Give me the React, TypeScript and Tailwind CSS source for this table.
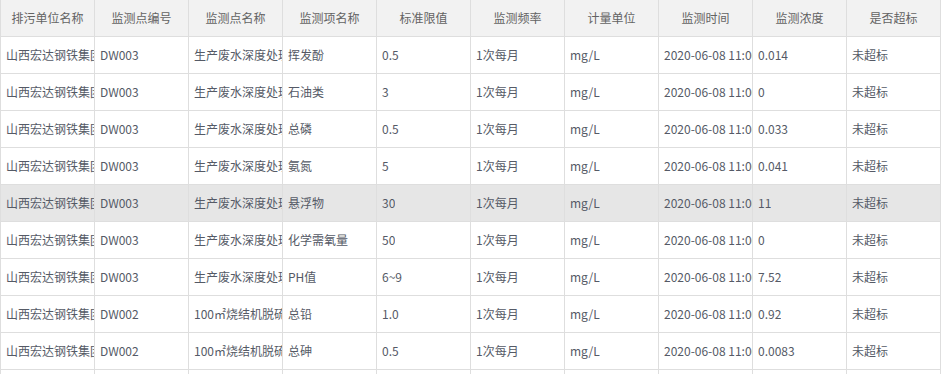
import React from "react";

const headers = ["排污单位名称", "监测点编号", "监测点名称", "监测项名称", "标准限值", "监测频率", "计量单位", "监测时间", "监测浓度", "是否超标"];

const rows: string[][] = [
  ["山西宏达钢铁集团有限公司", "DW003", "生产废水深度处理站排口", "挥发酚", "0.5", "1次每月", "mg/L", "2020-06-08 11:00:00", "0.014", "未超标"],
  ["山西宏达钢铁集团有限公司", "DW003", "生产废水深度处理站排口", "石油类", "3", "1次每月", "mg/L", "2020-06-08 11:00:00", "0", "未超标"],
  ["山西宏达钢铁集团有限公司", "DW003", "生产废水深度处理站排口", "总磷", "0.5", "1次每月", "mg/L", "2020-06-08 11:00:00", "0.033", "未超标"],
  ["山西宏达钢铁集团有限公司", "DW003", "生产废水深度处理站排口", "氨氮", "5", "1次每月", "mg/L", "2020-06-08 11:00:00", "0.041", "未超标"],
  ["山西宏达钢铁集团有限公司", "DW003", "生产废水深度处理站排口", "悬浮物", "30", "1次每月", "mg/L", "2020-06-08 11:00:00", "11", "未超标"],
  ["山西宏达钢铁集团有限公司", "DW003", "生产废水深度处理站排口", "化学需氧量", "50", "1次每月", "mg/L", "2020-06-08 11:00:00", "0", "未超标"],
  ["山西宏达钢铁集团有限公司", "DW003", "生产废水深度处理站排口", "PH值", "6~9", "1次每月", "mg/L", "2020-06-08 11:00:00", "7.52", "未超标"],
  ["山西宏达钢铁集团有限公司", "DW002", "100㎡烧结机脱硫废水排口", "总铅", "1.0", "1次每月", "mg/L", "2020-06-08 11:00:00", "0.92", "未超标"],
  ["山西宏达钢铁集团有限公司", "DW002", "100㎡烧结机脱硫废水排口", "总砷", "0.5", "1次每月", "mg/L", "2020-06-08 11:00:00", "0.0083", "未超标"],
  ["山西宏达钢铁集团有限公司", "DW002", "100㎡烧结机脱硫废水排口", "总镉", "0.1", "1次每月", "mg/L", "2020-06-08 11:00:00", "0.0005", "未超标"],
];

const gridCols = "grid grid-cols-[95px_repeat(9,94px)]";

export default function App() {
  return (
    <div
      className="w-[941px] h-[374px] overflow-hidden bg-white text-[12px]"
      style={{ fontFamily: '"Noto Sans CJK SC", "Noto Sans", sans-serif' }}
    >
      <div className={`${gridCols} bg-[#f2f2f2] text-[#636363]`}>
        {headers.map((h, i) => (
          <div
            key={h}
            className={`h-[37px] flex items-center justify-center border-b border-r border-[#dedede] overflow-hidden whitespace-nowrap ${i === 0 ? "border-l" : ""}`}
          >
            {h}
          </div>
        ))}
      </div>
      {rows.map((r, ri) => (
        <div key={ri} className={`${gridCols} ${ri === 4 ? "bg-[#e6e6e6]" : "bg-white"} text-[#555a66]`}>
          {r.map((c, ci) => (
            <div
              key={ci}
              className={`h-[37px] flex items-center pl-[5px] border-b border-r border-[#dedede] overflow-hidden whitespace-nowrap ${ci === 0 ? "border-l" : ""}`}
            >
              <span className="block min-w-0 overflow-hidden whitespace-nowrap">{c}</span>
            </div>
          ))}
        </div>
      ))}
    </div>
  );
}
